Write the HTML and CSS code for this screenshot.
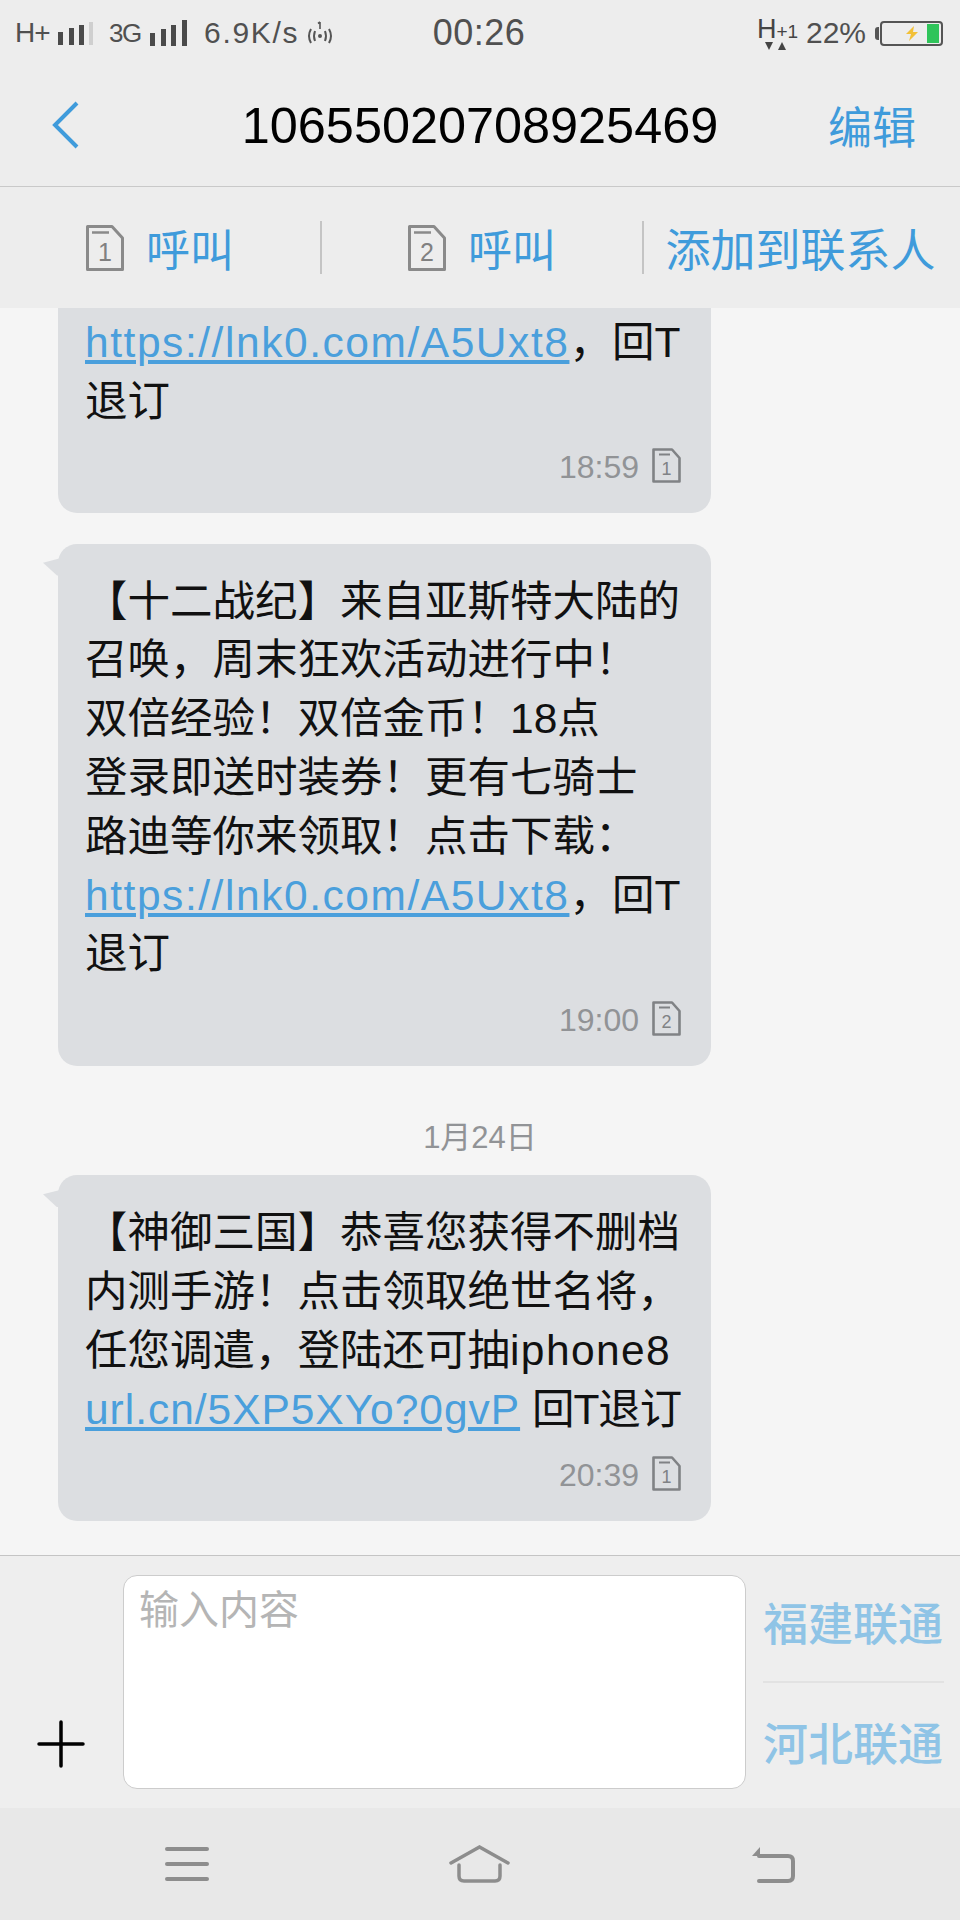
FILE: index.html
```html
<!DOCTYPE html>
<html lang="zh-CN">
<head>
    <meta charset="UTF-8">
    <meta name="viewport" content="width=device-width, initial-scale=1.0">
    <title>10655020708925469</title>
    <link rel="stylesheet" href="styles.css">
</head>
<body>
    <div class="statusbar">
        <div class="status-left">
            <span class="net-h">H+</span>
            <svg class="signal-a" width="35" height="23" viewBox="0 0 35 23">
                <rect x="0" y="10" width="5" height="13" fill="#4a4a4a"/>
                <rect x="11" y="6" width="5" height="17" fill="#4a4a4a"/>
                <rect x="21" y="3" width="5" height="20" fill="#4a4a4a"/>
                <rect x="31" y="0" width="4" height="23" fill="#cfcfcf"/>
            </svg>
            <span class="net-3g">3G</span>
            <svg class="signal-b" width="37" height="26" viewBox="0 0 37 26">
                <rect x="0" y="13" width="5" height="13" fill="#4a4a4a"/>
                <rect x="11" y="9" width="5" height="17" fill="#4a4a4a"/>
                <rect x="21" y="5" width="5" height="21" fill="#4a4a4a"/>
                <rect x="32" y="0" width="5" height="26" fill="#4a4a4a"/>
            </svg>
            <span class="speed">6.9K/s</span>
            <svg class="radio" width="28" height="26" viewBox="0 0 28 26" fill="none" stroke="#555" stroke-width="2">
                <path d="M5 9 Q1 16 5 23"/>
                <path d="M9 11 Q7 16 9 21"/>
                <path d="M19 11 Q21 16 19 21"/>
                <path d="M23 9 Q27 16 23 23"/>
                <circle cx="14" cy="16" r="2" fill="#555" stroke="none"/>
                <path d="M14 2 V9 M12 3.500 L14 2" stroke-width="1.600"/>
            </svg>
        </div>
        <div class="clock">00:26</div>
        <div class="status-right">
            <div class="hd">
                <div class="hd-text"><span class="hd-h">H</span><span class="hd-plus">+1</span></div>
                <svg width="30" height="8" viewBox="0 0 30 8">
                    <path d="M8 0 H16 L12 8 Z" fill="#444"/>
                    <path d="M21 8 H29 L25 0 Z" fill="#444"/>
                </svg>
            </div>
            <span class="percent">22%</span>
            <div class="battery">
                <svg class="bolt" width="14" height="15" viewBox="0 0 14 15">
                    <path d="M9 0 L1 8 H6 L4 15 L13 6 H8 Z" fill="#f2c037"/>
                </svg>
                <div class="battery-fill"></div>
            </div>
        </div>
    </div>

    <div class="header">
        <svg class="back" width="27" height="48" viewBox="0 0 27 48" fill="none" stroke="#3f9bdb" stroke-width="4">
            <path d="M25 2 L3 24 L25 46"/>
        </svg>
        <div class="title">10655020708925469</div>
        <div class="edit">编辑</div>
    </div>

    <div class="actions">
        <div class="action">
            <svg class="sim" width="38" height="46" viewBox="0 0 38 46">
                <path d="M1.500 1.500 H26 L36.500 13 V44.500 H1.500 Z" fill="none" stroke="#8a8a8a" stroke-width="3" stroke-linejoin="round"/>
                <path d="M6 7.500 H23" stroke="#8a8a8a" stroke-width="2.500"/>
                <text x="19" y="36" class="sim-num">1</text>
            </svg>
            <span>呼叫</span>
        </div>
        <div class="action">
            <svg class="sim" width="38" height="46" viewBox="0 0 38 46">
                <path d="M1.500 1.500 H26 L36.500 13 V44.500 H1.500 Z" fill="none" stroke="#8a8a8a" stroke-width="3" stroke-linejoin="round"/>
                <path d="M6 7.500 H23" stroke="#8a8a8a" stroke-width="2.500"/>
                <text x="19" y="36" class="sim-num">2</text>
            </svg>
            <span>呼叫</span>
        </div>
        <div class="action action-add">
            <span>添加到联系人</span>
        </div>
    </div>

    <div class="messages">
        <div class="bubble bubble-cut">
            <p><a class="link">https://lnk0.com/A5Uxt8</a>，回T<br>退订</p>
            <div class="meta">
                <span>18:59</span>
                <svg width="29" height="35" viewBox="0 0 29 35">
                    <path d="M1.500 1.500 H20 L27.500 10 V33.500 H1.500 Z" fill="none" stroke="#808285" stroke-width="2.600" stroke-linejoin="round"/>
                    <path d="M7 6.500 H18" stroke="#808285" stroke-width="2"/>
                    <text x="14.500" y="27" class="meta-num">1</text>
                </svg>
            </div>
        </div>

        <div class="bubble">
            <p>【十二战纪】来自亚斯特大陆的<br>召唤，周末狂欢活动进行中！<br>双倍经验！双倍金币！18点<br>登录即送时装券！更有七骑士<br>路迪等你来领取！点击下载：<br><a class="link">https://lnk0.com/A5Uxt8</a>，回T<br>退订</p>
            <div class="meta">
                <span>19:00</span>
                <svg width="29" height="35" viewBox="0 0 29 35">
                    <path d="M1.500 1.500 H20 L27.500 10 V33.500 H1.500 Z" fill="none" stroke="#808285" stroke-width="2.600" stroke-linejoin="round"/>
                    <path d="M7 6.500 H18" stroke="#808285" stroke-width="2"/>
                    <text x="14.500" y="27" class="meta-num">2</text>
                </svg>
            </div>
        </div>

        <div class="date">1月24日</div>

        <div class="bubble bubble-last">
            <p>【神御三国】恭喜您获得不删档<br>内测手游！点击领取绝世名将，<br>任您调遣，登陆还可抽<span class="wide">iphone8</span><br><a class="link link-short">url.cn/5XP5XYo?0gvP</a> <span class="tight">回T退订</span></p>
            <div class="meta">
                <span>20:39</span>
                <svg width="29" height="35" viewBox="0 0 29 35">
                    <path d="M1.500 1.500 H20 L27.500 10 V33.500 H1.500 Z" fill="none" stroke="#808285" stroke-width="2.600" stroke-linejoin="round"/>
                    <path d="M7 6.500 H18" stroke="#808285" stroke-width="2"/>
                    <text x="14.500" y="27" class="meta-num">1</text>
                </svg>
            </div>
        </div>
    </div>

    <div class="composer">
        <svg class="plus" width="48" height="48" viewBox="0 0 48 48" stroke="#000" stroke-width="3.500" stroke-linecap="round">
            <path d="M24 2 V46"/>
            <path d="M2 24 H46"/>
        </svg>
        <div class="input">输入内容</div>
        <div class="channels">
            <div class="channel">福建联通</div>
            <div class="channel">河北联通</div>
        </div>
    </div>

    <div class="navbar">
        <svg width="44" height="36" viewBox="0 0 44 36" stroke="#8d8d8d" stroke-width="4" stroke-linecap="round">
            <path d="M2 3 H42"/>
            <path d="M2 18 H42"/>
            <path d="M2 33 H42"/>
        </svg>
        <svg width="61" height="38" viewBox="0 0 61 38" fill="none" stroke="#8d8d8d" stroke-width="3.500" stroke-linecap="round">
            <path d="M2 18 L30.500 2 L59 18"/>
            <path d="M10 20 V31 Q10 36 15 36 H46 Q51 36 51 31 V20"/>
        </svg>
        <svg width="44" height="37" viewBox="0 0 44 37" fill="none" stroke="#8d8d8d" stroke-width="4" stroke-linecap="round">
            <path d="M8 10 H37 Q42 10 42 15 V30 Q42 35 37 35 H8"/>
            <path d="M9 1 L1 10 H9 Z" fill="#8d8d8d" stroke="none"/>
        </svg>
    </div>
</body>
</html>
```

FILE: styles.css
```css
body {
    display: flex;
    flex-direction: column;
    width: 960px;
    height: 1920px;
    margin: 0;
    overflow: hidden;
    background-color: #f5f5f5;
    font-family: "Liberation Sans", "Noto Sans CJK SC", sans-serif;
}

.statusbar {
    display: grid;
    grid-template-columns: 1fr auto 1fr;
    align-items: center;
    box-sizing: border-box;
    height: 64px;
    padding: 2px 17px 0 15px;
    background-color: #ededed;
    color: #505050;
}

.status-left,
.status-right {
    display: flex;
    align-items: center;
}

.status-right {
    justify-content: flex-end;
}

.net-h {
    width: 43px;
    font-size: 28px;
    letter-spacing: -1px;
}

.net-3g {
    width: 41px;
    margin-left: 16px;
    font-size: 26px;
    letter-spacing: -1.500px;
}

.speed {
    margin-left: 17px;
    font-size: 30px;
    letter-spacing: 1.700px;
}

.radio {
    margin-left: 7px;
}

.clock {
    font-size: 36px;
    letter-spacing: 0.500px;
}

.hd {
    display: flex;
    flex-direction: column;
    width: 42px;
}

.hd-text {
    display: flex;
    align-items: baseline;
    height: 26px;
    line-height: 26px;
    color: #444;
}

.hd-h {
    font-size: 27px;
}

.hd-plus {
    font-size: 19px;
}

.percent {
    margin: 0 14px 0 7px;
    font-size: 30px;
}

.battery {
    position: relative;
    display: flex;
    justify-content: flex-end;
    align-items: center;
    box-sizing: border-box;
    width: 63px;
    height: 25px;
    padding-right: 2px;
    border: 2px solid #555;
    border-radius: 4px;
}

.battery::before {
    content: "";
    position: absolute;
    left: -7px;
    top: 4px;
    width: 4px;
    height: 13px;
    background-color: #555;
    border-radius: 3px 0 0 3px;
}

.battery-fill {
    width: 12px;
    height: 19px;
    background-color: #2fc45a;
}

.bolt {
    margin-right: 8px;
}

.header {
    display: grid;
    grid-template-columns: 1fr auto 1fr;
    align-items: center;
    height: 122px;
    padding: 0 44px 0 44px;
    border-bottom: 1px solid #c9c9c9;
    background-color: #ededed;
}

.back {
    margin-left: 8px;
}

.title {
    font-size: 50.400px;
    color: #000;
}

.edit {
    justify-self: end;
    font-size: 44px;
    color: #3f9bdb;
}

.actions {
    display: grid;
    grid-template-columns: 320px 322px 1fr;
    align-items: center;
    height: 121px;
    background-color: #ededed;
    font-size: 44px;
    color: #3f9bdb;
}

.action {
    display: flex;
    justify-content: center;
    align-items: center;
    gap: 22px;
    height: 53px;
    border-left: 2px solid #c4c4c4;
}

.action:first-child {
    border-left: none;
}

.action-add {
    padding-right: 3px;
    font-size: 45px;
}

.sim-num {
    font-size: 25px;
    fill: #808080;
    text-anchor: middle;
}

.messages {
    flex: 1;
    overflow: hidden;
    padding: 0 249px 0 58px;
    background-color: #f5f5f5;
}

.bubble {
    position: relative;
    margin-top: 31px;
    padding: 29px 30px 23px 27px;
    background-color: #dcdee1;
    border-radius: 19px;
}

.bubble::before {
    content: "";
    position: absolute;
    left: -15px;
    top: 14px;
    width: 20px;
    height: 18px;
    background-color: #dcdee1;
    clip-path: polygon(0 28%, 100% 0, 100% 100%, 70% 100%);
}

.bubble-cut {
    margin-top: 0;
    padding-top: 6px;
    padding-bottom: 22px;
    border-radius: 0 0 19px 19px;
}

.bubble-cut::before {
    display: none;
}

.bubble-last {
    margin-top: 17px;
}

.bubble p {
    margin: 0;
    font-size: 42.500px;
    line-height: 58.800px;
    color: #111;
    white-space: nowrap;
}

.link {
    color: #4a9fdc;
    text-decoration: underline;
    letter-spacing: 1.550px;
}

.link-short {
    letter-spacing: 0.970px;
}

.wide {
    letter-spacing: 1.400px;
}

.tight {
    letter-spacing: -1px;
}

.meta {
    display: flex;
    justify-content: flex-end;
    align-items: center;
    gap: 13px;
    height: 46px;
    margin-top: 13px;
    font-size: 32px;
    color: #919396;
}

.meta svg {
    margin-bottom: 4px;
}

.meta-num {
    font-size: 18px;
    fill: #808285;
    text-anchor: middle;
}

.date {
    height: 40px;
    margin: 52px -249px 0 -58px;
    font-size: 31px;
    line-height: 40px;
    text-align: center;
    color: #919396;
}

.composer {
    display: grid;
    grid-template-columns: 86px 623px 1fr;
    height: 253px;
    padding: 19px 16px 0 37px;
    box-sizing: border-box;
    border-top: 1px solid #c4c4c4;
    background-color: #eeeeee;
}

.plus {
    align-self: end;
    margin-bottom: 40px;
}

.input {
    box-sizing: border-box;
    height: 214px;
    padding: 2px 15px;
    border: 1px solid #cccccc;
    border-radius: 14px;
    background-color: #fff;
    font-size: 40px;
    color: #b5b5b5;
}

.channels {
    display: flex;
    flex-direction: column;
    height: 214px;
    margin-left: 17px;
}

.channel {
    display: flex;
    align-items: center;
    box-sizing: border-box;
    height: 106px;
    padding-top: 10px;
    font-size: 45px;
    font-weight: 500;
    color: #8fc4e6;
    white-space: nowrap;
}

.channel:first-child {
    height: 108px;
    padding-top: 0;
    padding-bottom: 14px;
    border-bottom: 2px solid #e2e2e2;
}

.navbar {
    display: grid;
    grid-template-columns: repeat(3, 1fr);
    justify-items: center;
    align-items: center;
    height: 112px;
    padding: 0 40px;
    background-color: #e8e8e8;
}
```
